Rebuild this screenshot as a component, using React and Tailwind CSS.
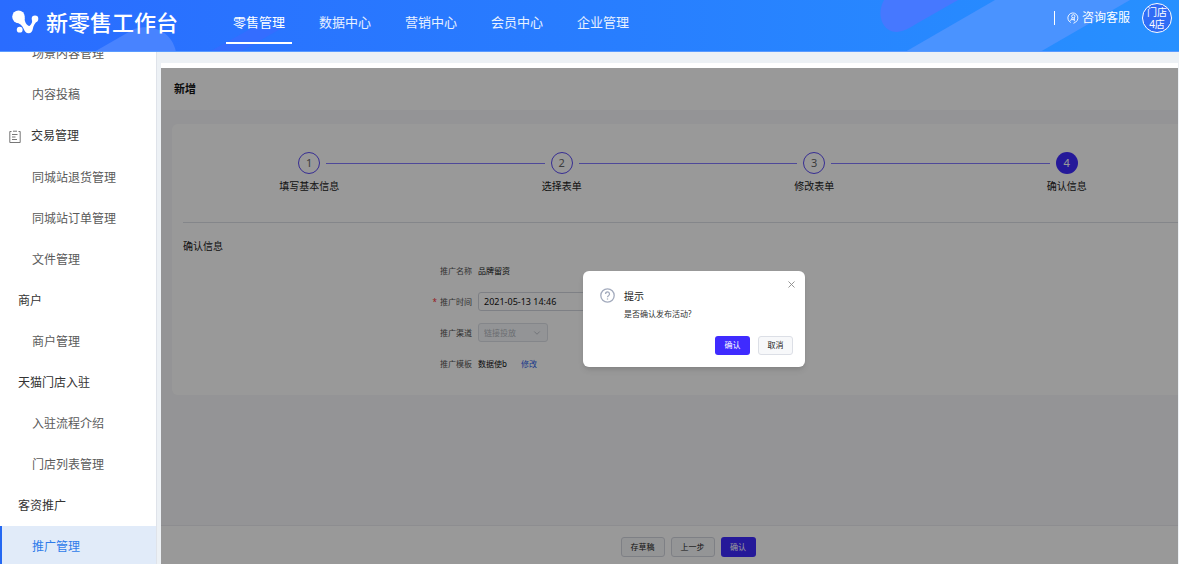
import React, { useState } from 'react';
import { ChevronDown, X } from 'lucide-react';

const topNav = ['零售管理', '数据中心', '营销中心', '会员中心', '企业管理'];

const sideMenu = [
  { title: '场景内容管理', type: 'item' },
  { title: '内容投稿', type: 'item' },
  { title: '交易管理', type: 'section' },
  { title: '同城站退货管理', type: 'item' },
  { title: '同城站订单管理', type: 'item' },
  { title: '文件管理', type: 'item' },
  { title: '商户', type: 'group' },
  { title: '商户管理', type: 'item' },
  { title: '天猫门店入驻', type: 'group' },
  { title: '入驻流程介绍', type: 'item' },
  { title: '门店列表管理', type: 'item' },
  { title: '客资推广', type: 'group' },
  { title: '推广管理', type: 'item', active: true },
];

const steps = ['填写基本信息', '选择表单', '修改表单', '确认信息'];

const LogoMark = () => (
  <svg width="28" height="24" viewBox="0 0 28 24" fill="#fff" aria-hidden="true">
    <circle cx="7.500" cy="6.700" r="6.300" />
    <path d="M5 12.700C8.500 13 11 15 12.500 18.500C13.800 21.500 15 23.200 17.600 23.200C20.200 23.200 21.300 21.500 21.800 19C22.400 15.500 23.500 13.500 26.500 11L21.500 7.500C21.500 11.500 20.800 14.500 18.500 16C15.500 15.500 13.500 12 13.600 7.500Z" />
    <circle cx="24" cy="8.700" r="3.300" />
    <circle cx="8.700" cy="19.700" r="2.900" />
  </svg>
);

const ClipboardIcon = () => (
  <svg width="12" height="13" viewBox="0 0 12 13" fill="none" stroke="#777" aria-hidden="true">
    <path d="M2.500 1.500H.8v11h10.400v-11H9.500" />
    <path d="M4 1.200h4M3 4.500h5.500M3 7h3.500M3 9.500h5" />
  </svg>
);

const ServiceIcon = () => (
  <svg width="12" height="12" viewBox="0 0 12 12" fill="none" stroke="#fff" strokeWidth="0.9" aria-hidden="true">
    <path d="M3.800 10.500A5 5 0 1 1 8.800 10L6.500 11.300" />
    <circle cx="6.300" cy="4.300" r="1.600" />
    <path d="M5.300 5.700 3.500 8.800M7.300 5.700v3.500M4.600 7.600h2.700" />
  </svg>
);

const QuestionIcon = () => (
  <svg width="15" height="15" viewBox="0 0 15 15" fill="none" stroke="#a3abbd" strokeWidth="1.300" aria-hidden="true">
    <circle cx="7.500" cy="7.500" r="6.700" />
    <path d="M5.500 6a2 2 0 1 1 3 1.700c-.7.4-1 .7-1 1.500" />
    <path d="M7.500 10.400v1.200" />
  </svg>
);

const Header = () => (
  <header className="relative flex h-[52px] shrink-0 overflow-hidden border-b border-[#5a9bff] bg-linear-to-r from-[#2a6cff] via-[#287dff] to-[#2790ff] text-white">
    <svg className="absolute left-0 top-0" width="320" height="52" aria-hidden="true">
      <path d="M94 52 L134 29 C155 23 172 33 176 52 Z" fill="#4883ff" />
      <path d="M209 52 L252 28 H282 L240 52 Z" fill="#4a60ff" opacity="0.35" />
    </svg>
    <svg className="absolute right-0 top-0" width="309" height="52" aria-hidden="true">
      <path d="M14 0 C6 14 12 32 27 32 C34 31 40 28 46 24 L88 0 Z" fill="#4678ff" />
      <path d="M35 52 L125 0 H260 L170 52 Z" fill="#4a93ff" />
    </svg>
    <a href="#home" className="relative flex h-[43px] w-[226px] shrink-0 items-center gap-[7px] pl-[11px]">
      <LogoMark />
      <span className="whitespace-nowrap text-[22px] leading-6 font-medium">新零售工作台</span>
    </a>
    <nav className="relative flex gap-5">
      {topNav.map((name, i) => (
        <a
          key={name}
          href="#nav"
          className={
            i === 0
              ? 'h-11 border-b-2 border-white px-[7px] text-[13px] leading-[45px] whitespace-nowrap'
              : 'h-11 px-[7px] text-[13px] leading-[45px] whitespace-nowrap text-white/90'
          }
        >
          {name}
        </a>
      ))}
    </nav>
    <div className="relative ml-auto flex h-9 items-center pr-[7px]">
      <span className="mr-3 h-[14px] w-px bg-white" />
      <button type="button" className="mr-3 flex items-center gap-[3px] whitespace-nowrap text-[12px] leading-4">
        <ServiceIcon />
        咨询客服
      </button>
      <button type="button" className="flex size-[30px] flex-col items-center justify-center rounded-full border border-white bg-[#2f6cf5] text-[10px] leading-3">
        <span>门店</span>
        <span>4店</span>
      </button>
    </div>
  </header>
);

const Sidebar = () => (
  <aside className="w-[157px] shrink-0 overflow-hidden border-r border-[#dfe3ea] bg-white">
    {/* the list is scrolled a little, its first entry is half under the header */}
    <ul className="-mt-[19px] text-[12px]">
      {sideMenu.map((item) => {
        if (item.type === 'section') {
          return (
            <li key={item.title}>
              <a href="#menu" className="flex h-[42px] items-center gap-[10px] pl-[9px] text-[#333]">
                <ClipboardIcon />
                {item.title}
              </a>
            </li>
          );
        }
        if (item.type === 'group') {
          return (
            <li key={item.title} className="flex h-[41px] items-center pl-[18px] text-[#333]">
              {item.title}
            </li>
          );
        }
        return (
          <li key={item.title}>
            <a
              href="#menu"
              className={
                item.active
                  ? 'flex h-[41px] items-center border-l-2 border-[#2468f2] bg-[#e1ebf9] pl-[30px] text-[#2e7bea]'
                  : 'flex h-[41px] items-center pl-8 text-[#5a5a5a]'
              }
            >
              {item.title}
            </a>
          </li>
        );
      })}
    </ul>
  </aside>
);

const Steps = () => (
  <ol className="grid grid-cols-4">
    {steps.map((name, i) => {
      const last = i === steps.length - 1;
      return (
        <li key={name} className="flex flex-col items-center">
          <div className="flex w-full items-center gap-[6px]">
            <span className={i === 0 ? 'h-px flex-1' : 'h-px flex-1 bg-[#8378ff]'} />
            <span
              className={
                last
                  ? 'flex size-[22px] items-center justify-center rounded-full bg-[#3f2bff] text-[11px] text-white'
                  : 'flex size-[22px] items-center justify-center rounded-full border border-[#5c4cf5] text-[11px] text-[#666]'
              }
            >
              {i + 1}
            </span>
            <span className={last ? 'h-px flex-1' : 'h-px flex-1 bg-[#8378ff]'} />
          </div>
          <span className="mt-1 text-[10px] leading-4 text-[#222]">{name}</span>
        </li>
      );
    })}
  </ol>
);

const Row = ({ label, htmlFor, required, children }) => (
  <div className="flex h-[19px] items-center gap-[6px]">
    <label htmlFor={htmlFor} className="w-[289px] shrink-0 text-right text-[#555]">
      {required && <span className="mr-[3px] text-red-500">*</span>}
      {label}
    </label>
    {children}
  </div>
);

const PromotionForm = () => {
  const [time, setTime] = useState('2021-05-13 14:46');

  return (
    <form className="mt-[7px] flex flex-col gap-3 text-[8px] leading-3 text-[#111]">
      <Row label="推广名称">
        <span>品牌留资</span>
      </Row>
      <Row label="推广时间" htmlFor="time" required>
        <input
          id="time"
          value={time}
          onChange={(e) => setTime(e.target.value)}
          className="h-[19px] w-[180px] rounded-[3px] border border-[#d3d6de] px-[5px] text-[9px]"
        />
      </Row>
      <Row label="推广渠道" htmlFor="channel">
        <div className="relative">
          <select
            id="channel"
            disabled
            className="block h-[19px] w-[70px] appearance-none rounded-[3px] border border-[#dcdfe6] bg-[#f5f7fa] px-[5px] text-[8px] text-[#b4b8c0] opacity-100"
          >
            <option>链接投放</option>
          </select>
          <ChevronDown size={10} strokeWidth={2} className="absolute top-[5px] right-[6px] text-[#b4b8c0]" />
        </div>
      </Row>
      <Row label="推广模板">
        <span>数据使b</span>
        <a href="#edit" className="ml-2 text-[#2f5fe8]">修改</a>
      </Row>
    </form>
  );
};

const ConfirmDialog = ({ onClose }) => (
  <div className="absolute inset-y-0 left-0 flex w-[calc(100%+49px)] items-center justify-center bg-black/40 pt-[5px]">
    <div role="dialog" aria-labelledby="dialog-title" className="relative flex h-24 w-[222px] gap-[9px] rounded-md bg-white pt-[17px] pr-3 pl-[17px] shadow-md">
      <button type="button" aria-label="关闭" onClick={onClose} className="absolute top-2 right-2 text-[#8c8c8c]">
        <X size={11} strokeWidth={2} />
      </button>
      <QuestionIcon />
      <div className="flex-1">
        <h2 id="dialog-title" className="text-[10px] leading-4 text-[#222]">提示</h2>
        <p className="mt-1 text-[8px] leading-3 text-[#333]">是否确认发布活动?</p>
        <div className="mt-4 flex justify-end gap-2 text-[8px]">
          <button type="button" onClick={onClose} className="h-[19px] w-[35px] rounded-[3px] bg-[#3f2bff] text-white">确认</button>
          <button type="button" onClick={onClose} className="h-[19px] w-[35px] rounded-[3px] border border-[#dcdfe6] bg-[#f7f8fa] text-[#222]">取消</button>
        </div>
      </div>
    </div>
  </div>
);

export default function App() {
  const [open, setOpen] = useState(true);

  return (
    <div className="flex h-screen flex-col overflow-hidden bg-[#edf1f5] font-['Noto_Sans','Noto_Sans_CJK_SC',sans-serif]">
      <Header />
      <div className="flex min-h-0 flex-1">
        <Sidebar />
        <div className="flex min-w-0 flex-1 flex-col pt-[11px] pr-px pl-1">
          <div className="h-[5px] shrink-0 bg-white" />
          <main className="relative min-h-0 flex-1 overflow-hidden bg-[#f7f7fa]">
            {/* content runs wider than the visible pane and is cut on the right */}
            <div className="flex h-full w-[calc(100%+37px)] flex-col">
              <h1 className="h-[42px] shrink-0 bg-white pl-[13px] text-[11px] leading-[42px] font-bold text-[#111]">新增</h1>
              <section className="mx-[11px] mt-[14px] rounded-md bg-white px-[11px] pt-7 pb-[22px]">
                <Steps />
                <h2 className="mt-7 border-t border-[#dcdfe6] pt-[15px] text-[10px] leading-4 text-[#222]">确认信息</h2>
                <PromotionForm />
              </section>
              <footer className="mt-auto flex h-[39px] shrink-0 items-center justify-center gap-[6px] border-t border-[#ececf0] bg-white pt-1 text-[8px]">
                <button type="button" className="h-5 w-11 rounded-[3px] border border-[#d3d6de] bg-[#f7f8fa] text-[#222]">存草稿</button>
                <button type="button" className="h-5 w-11 rounded-[3px] border border-[#d3d6de] bg-[#f7f8fa] text-[#222]">上一步</button>
                <button type="button" className="h-5 w-[35px] rounded-[3px] bg-[#3f2bff] text-white">确认</button>
              </footer>
            </div>
            {open && <ConfirmDialog onClose={() => setOpen(false)} />}
          </main>
        </div>
      </div>
    </div>
  );
}
